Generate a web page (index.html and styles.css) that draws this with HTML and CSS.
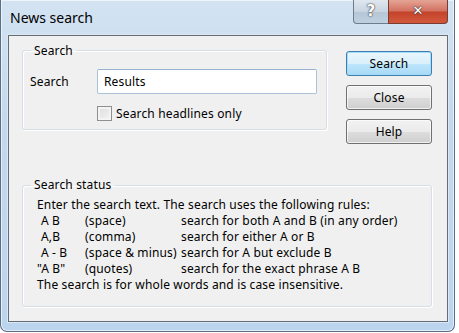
FILE: index.html
```html
<!DOCTYPE html>
<html lang="en">
<head>
    <meta charset="UTF-8">
    <title>News search</title>
    <link rel="stylesheet" href="styles.css">
</head>
<body>
    <div class="window">
        <div class="titlebar">
            <div class="title">News search</div>
            <div class="caption-buttons">
                <div class="cap-btn help">?</div>
                <div class="cap-btn close">&#x2715;</div>
            </div>
        </div>

        <div class="client">
            <div class="top-row">
                <!-- Search group -->
                <fieldset class="group search-group">
                    <legend>Search</legend>
                    <div class="field-row">
                        <label class="field-label" for="query">Search</label>
                        <input id="query" class="text-input" type="text" value="Results">
                    </div>
                    <div class="check-row">
                        <span class="checkbox"></span>
                        <span>Search headlines only</span>
                    </div>
                </fieldset>

                <div class="buttons">
                    <button class="btn default">Search</button>
                    <button class="btn">Close</button>
                    <button class="btn">Help</button>
                </div>
            </div>

            <!-- Status group -->
            <fieldset class="group status-group">
                <legend>Search status</legend>
                <div class="line">Enter the search text. The search uses the following rules:</div>
                <div class="rules">
                    <span class="ind">A B</span><span>(space)</span><span>search for both A and B (in any order)</span>
                    <span class="ind">A,B</span><span>(comma)</span><span>search for either A or B</span>
                    <span class="ind">A - B</span><span>(space &amp; minus)</span><span>search for A but exclude B</span>
                    <span>"A B"</span><span>(quotes)</span><span>search for the exact phrase A B</span>
                </div>
                <div class="line">The search is for whole words and is case insensitive.</div>
            </fieldset>
        </div>
    </div>
</body>
</html>
```

FILE: styles.css
```css
body {
    margin: 0;
    background: #ffffff;
    font-family: 'Noto Sans', 'Open Sans', sans-serif;
    font-size: 12px;
    letter-spacing: 0.15px;
    color: #000;
}

.window {
    box-sizing: border-box;
    width: 455px;
    height: 332px;
    border: 1px solid #5b6e85;
    border-top: none;
    border-radius: 0 0 7px 7px;
    background: linear-gradient(180deg, #d3e3f2 0%, #c2d8ee 40%, #bcd5ee 100%);
    box-shadow: inset 0 0 0 1px rgba(255,255,255,0.6);
    padding: 0 6px 9px 7px;
    display: flex;
    flex-direction: column;
}

.titlebar {
    height: 35px;
    display: flex;
    justify-content: space-between;
    align-items: flex-start;
}

.title {
    font-size: 14px;
    letter-spacing: 0;
    padding: 8px 0 0 2px;
    color: #000;
}

.caption-buttons {
    display: flex;
}

.cap-btn {
    height: 23px;
    border: 1px solid #6d7d8f;
    border-top: none;
    color: #fff;
    font-family: 'DejaVu Sans', sans-serif;
    font-weight: bold;
    text-align: center;
    line-height: 22px;
    text-shadow: 0 0 1px #333, 0 0 2px #333;
}

.help {
    width: 34px;
    border-radius: 0 0 0 4px;
    border-right: none;
    font-size: 15px;
    background: linear-gradient(180deg, #dfe7ef 0%, #c9d5e2 50%, #b6c6d6 51%, #bfd0e0 100%);
}

.close {
    width: 58px;
    border-radius: 0 0 4px 0;
    font-size: 13px;
    background: linear-gradient(180deg, #e4a495 0%, #d37161 48%, #c4432b 52%, #d2593c 100%);
    border-color: #7a3b33;
}

.client {
    flex: 1;
    background: #f0f0f0;
    border: 1px solid #646c75;
    box-shadow: 0 0 0 1px #dbe7f3;
    padding: 6px 15px 0 13px;
}

.top-row {
    display: flex;
    gap: 19px;
    align-items: flex-start;
}

.group {
    margin: 0;
    border: 1px solid #d5dfe5;
    border-radius: 3px;
    box-shadow: inset 1px 1px 0 #fff, 1px 1px 0 #fff;
}

.group legend {
    padding: 0 3px;
}

.search-group {
    width: 305px;
    box-sizing: border-box;
    height: 88px;
    padding: 10px 8px 0 7px;
}

.search-group legend {
    margin-left: 1px;
}

.field-row {
    display: flex;
    align-items: center;
}

.field-label {
    width: 67px;
}

.text-input {
    box-sizing: border-box;
    width: 220px;
    height: 25px;
    border: 1px solid #abc1d8;
    border-top-color: #98b1cc;
    border-radius: 2px;
    padding: 0 6px;
    font-family: inherit;
    font-size: 12px;
    letter-spacing: 0.15px;
    color: #000;
    background: #fff;
}

.check-row {
    display: flex;
    align-items: center;
    gap: 4px;
    margin: 11px 0 0 67px;
}

.checkbox {
    box-sizing: border-box;
    width: 15px;
    height: 15px;
    border: 1px solid #8e8f8f;
    background: linear-gradient(135deg, #dcdcdc 0%, #f4f4f4 100%);
    box-shadow: inset 0 0 0 2px #f4f4f4;
}

.buttons {
    display: flex;
    flex-direction: column;
    gap: 9px;
    padding-top: 9px;
}

.btn {
    width: 86px;
    height: 25px;
    border: 1px solid #707070;
    border-radius: 3px;
    background: linear-gradient(180deg, #f2f2f2 0%, #ebebeb 50%, #dddddd 51%, #cfcfcf 100%);
    box-shadow: inset 0 0 0 1px rgba(255,255,255,0.7);
    font-family: inherit;
    font-size: 12px;
    letter-spacing: 0.15px;
    color: #000;
    padding: 0;
}

.btn.default {
    border-color: #3c7fb1;
    background: linear-gradient(180deg, #eaf6fd 0%, #d9f0fc 50%, #bee6fd 51%, #a7d9f5 100%);
    box-shadow: inset 0 0 0 1px #a6dcf8;
}

.status-group {
    width: 410px;
    box-sizing: border-box;
    height: 130px;
    margin-top: 33px;
    padding: 4px 10px 0 14px;
    line-height: 16px;
}

.status-group legend {
    margin-left: -6px;
}

.rules {
    display: grid;
    grid-template-columns: 48px 96px auto;
}

.ind {
    padding-left: 4px;
}
```
